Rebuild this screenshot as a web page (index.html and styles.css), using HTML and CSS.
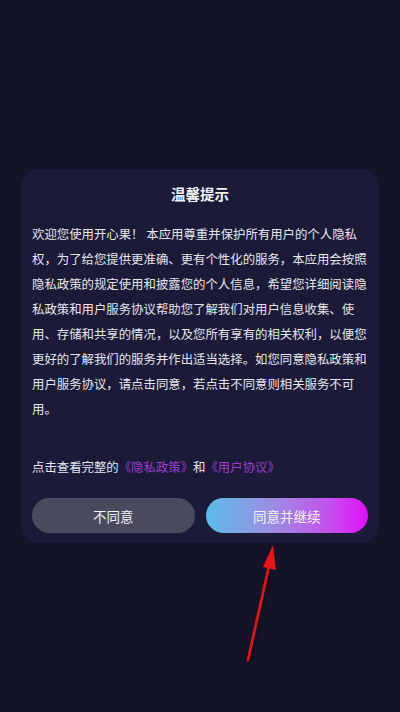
FILE: index.html
```html
<!DOCTYPE html>
<html lang="zh-CN">
<head>
<meta charset="utf-8">
<title>温馨提示</title>
<link rel="stylesheet" href="styles.css">
</head>
<body>
<div class="screen">
  <div class="dialog">
    <h2 class="title">温馨提示</h2>
    <p class="content">欢迎您使用开心果！ 本应用尊重并保护所有用户的个人隐私权，为了给您提供更准确、更有个性化的服务，本应用会按照隐私政策的规定使用和披露您的个人信息，希望您详细阅读隐私政策和用户服务协议帮助您了解我们对用户信息收集、使用、存储和共享的情况，以及您所有享有的相关权利，以便您更好的了解我们的服务并作出适当选择。如您同意隐私政策和用户服务协议，请点击同意，若点击不同意则相关服务不可用。</p>
    <p class="links">点击查看完整的<a class="link">《隐私政策》</a>和<a class="link">《用户协议》</a></p>
    <div class="actions">
      <button class="btn btn-cancel">不同意</button>
      <button class="btn btn-ok">同意并继续</button>
    </div>
  </div>
  <svg class="arrow" width="60" height="130" viewBox="0 0 60 130">
    <line x1="10" y1="121" x2="31" y2="30" stroke="#1a0a14" stroke-width="3" opacity="0.5" transform="translate(1.5,1)"/>
    <line x1="9" y1="120" x2="30" y2="26" stroke="#e8141c" stroke-width="2.6" stroke-linecap="round"/>
    <polygon points="34,5 37,30 24,27" fill="#e8141c"/>
  </svg>
</div>
</body>
</html>
```

FILE: styles.css
```css
* { box-sizing: border-box; }
html, body {
  margin: 0;
  padding: 0;
  background: #141429;
}
body {
  font-family: "Noto Sans CJK SC", "Noto Sans", sans-serif;
  color: #ececf2;
}
.screen {
  position: relative;
  width: 400px;
  height: 712px;
  display: flex;
  align-items: center;
  justify-content: center;
}
.dialog {
  width: 356px;
  background: #1b1b39;
  border-radius: 16px;
  padding: 15px 10px 10px;
  display: flex;
  flex-direction: column;
}
.title {
  margin: 0;
  text-align: center;
  font-size: 14.5px;
  line-height: 20px;
  font-weight: 700;
  color: #f2f2f6;
}
.content {
  margin: 18px 0 0;
  font-size: 12.4px;
  line-height: 25px;
  color: #e6e6ee;
}
.links {
  margin: 33px 0 0;
  font-size: 12.4px;
  line-height: 25px;
  color: #e6e6ee;
}
.link {
  color: #9b3bcf;
}
.actions {
  margin-top: 18px;
  display: flex;
  gap: 11px;
}
.btn {
  flex: 1;
  height: 35px;
  border: none;
  border-radius: 18px;
  font-family: inherit;
  font-size: 13.5px;
  color: #f2f2f8;
  padding: 0;
}
.btn-cancel {
  background: #4a4a5f;
}
.btn-ok {
  background: linear-gradient(90deg, #5bbbe8 0%, #9a8ee2 40%, #c453ec 75%, #e10ff8 100%);
}
.arrow {
  position: absolute;
  left: 239px;
  top: 540px;
}
```
